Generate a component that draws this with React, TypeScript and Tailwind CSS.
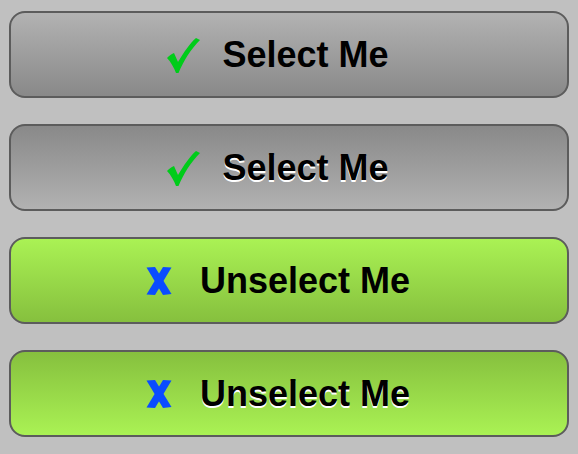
const font = { fontFamily: '"Liberation Sans", Arial, sans-serif' };

function Check() {
  return (
    <svg width="33" height="36" viewBox="0 0 33 36" className="shrink-0">
      <path
        d="M0 21 C2 19 4 17 7 16 L11 25 C17 15 23 6 29 1 L33 3 C24 12 17 23 11.5 36 L9 36 C7 31 4 25 0 21 Z"
        fill="#00cc1a"
      />
    </svg>
  );
}

function Cross() {
  return (
    <svg width="26" height="28" viewBox="0 0 26 28" className="shrink-0">
      <path d="M0.5 0.5 L9 0 L25.5 27 L17 28 Z" fill="#0a4cff" />
      <path d="M17 0 L25.5 0.5 L9 28 L0.5 27.5 Z" fill="#0a4cff" />
    </svg>
  );
}

type Props = {
  label: string;
  selected: boolean;
  pressed: boolean;
};

function ToggleButton({ label, selected, pressed }: Props) {
  const bg = selected
    ? pressed
      ? "bg-gradient-to-b from-[#86c03e] to-[#aaf254]"
      : "bg-gradient-to-b from-[#aaf254] to-[#86c03e]"
    : pressed
      ? "bg-gradient-to-b from-[#898989] to-[#b2b2b2]"
      : "bg-gradient-to-b from-[#b2b2b2] to-[#898989]";

  return (
    <button
      className={`flex h-[87px] w-full items-center justify-center rounded-[16px] border-2 border-[#5c5c5c] pr-[22px] ${bg}`}
    >
      <span className={selected ? "mr-[28px]" : "mr-[22px]"}>{selected ? <Cross /> : <Check />}</span>
      <span
        className={`text-[36px] font-bold leading-none text-black ${pressed ? "[text-shadow:0_2px_0_#ffffff]" : ""}`}
        style={font}
      >
        {label}
      </span>
    </button>
  );
}

export default function App() {
  return (
    <div className="flex h-[454px] w-[578px] flex-col gap-[26px] bg-[#c0c0c0] px-[9px] pt-[11px]">
      <ToggleButton label="Select Me" selected={false} pressed={false} />
      <ToggleButton label="Select Me" selected={false} pressed={true} />
      <ToggleButton label="Unselect Me" selected={true} pressed={false} />
      <ToggleButton label="Unselect Me" selected={true} pressed={true} />
    </div>
  );
}
